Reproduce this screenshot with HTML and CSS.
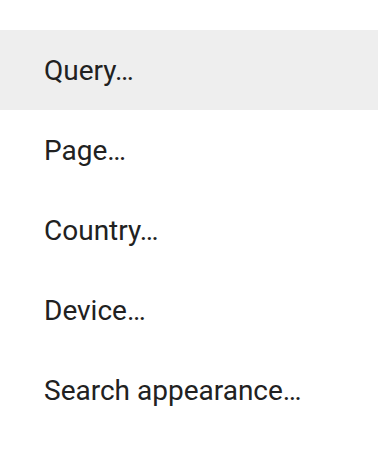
FILE: index.html
```html
<!DOCTYPE html>
<html lang="en">
<head>
  <meta charset="UTF-8">
  <meta name="viewport" content="width=device-width, initial-scale=1.0">
  <title>Filter menu</title>
  <link rel="stylesheet" href="styles.css">
</head>
<body>
  <ul class="menu">
    <li class="menu-item active">Query…</li>
    <li class="menu-item">Page…</li>
    <li class="menu-item">Country…</li>
    <li class="menu-item">Device…</li>
    <li class="menu-item">Search appearance…</li>
  </ul>
</body>
</html>
```

FILE: styles.css
```css
body {
  margin: 0;
  background: #ffffff;
  font-family: Roboto, "Liberation Sans", sans-serif;
}
.menu {
  list-style: none;
  margin: 0;
  padding: 30px 0 0 0;
}
.menu-item {
  height: 80px;
  display: flex;
  align-items: center;
  padding-left: 44px;
  font-size: 28px;
  color: #212121;
}
.active {
  background: #eeeeee;
}
```
